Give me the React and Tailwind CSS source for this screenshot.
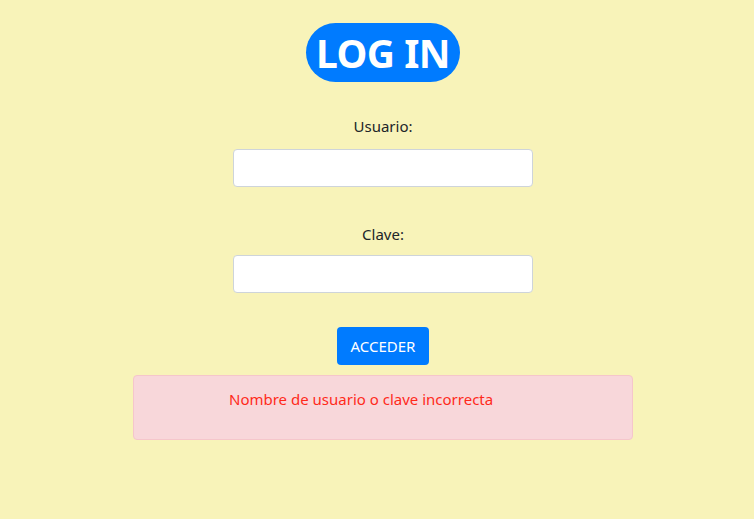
export default function App() {
  const font = { fontFamily: '"Noto Sans", "Open Sans", sans-serif' };
  return (
    <div className="min-h-[519px] w-full bg-[#f8f3b9] pl-[12px]" style={font}>
      <div className="flex flex-col items-center pt-[23px]">
        <div className="h-[59px] w-[154px] rounded-full bg-[#007bff] flex items-center justify-center">
          <span className="text-white font-bold text-[39px] leading-none tracking-[-0.5px]">LOG IN</span>
        </div>
        <label className="mt-[32px] text-[15px] leading-[24px] text-[#212529]">Usuario:</label>
        <input className="mt-[11px] h-[38px] w-[300px] rounded-[4px] border border-[#ced4da] bg-white outline-none" />
        <label className="mt-[35px] text-[15px] leading-[24px] text-[#212529]">Clave:</label>
        <input type="password" className="mt-[9px] h-[38px] w-[300px] rounded-[4px] border border-[#ced4da] bg-white outline-none" />
        <button className="mt-[34px] h-[38px] w-[92px] rounded-[4px] bg-[#007bff] text-white text-[15px] leading-[24px]">ACCEDER</button>
        <div className="mt-[10px] h-[65px] w-[500px] rounded-[4px] border border-[#f5c6cb] bg-[#f8d7da] pl-[95px] pt-[11px]">
          <span className="text-[15px] leading-[24px] text-[#ff2a1a]">Nombre de usuario o clave incorrecta</span>
        </div>
      </div>
    </div>
  );
}
